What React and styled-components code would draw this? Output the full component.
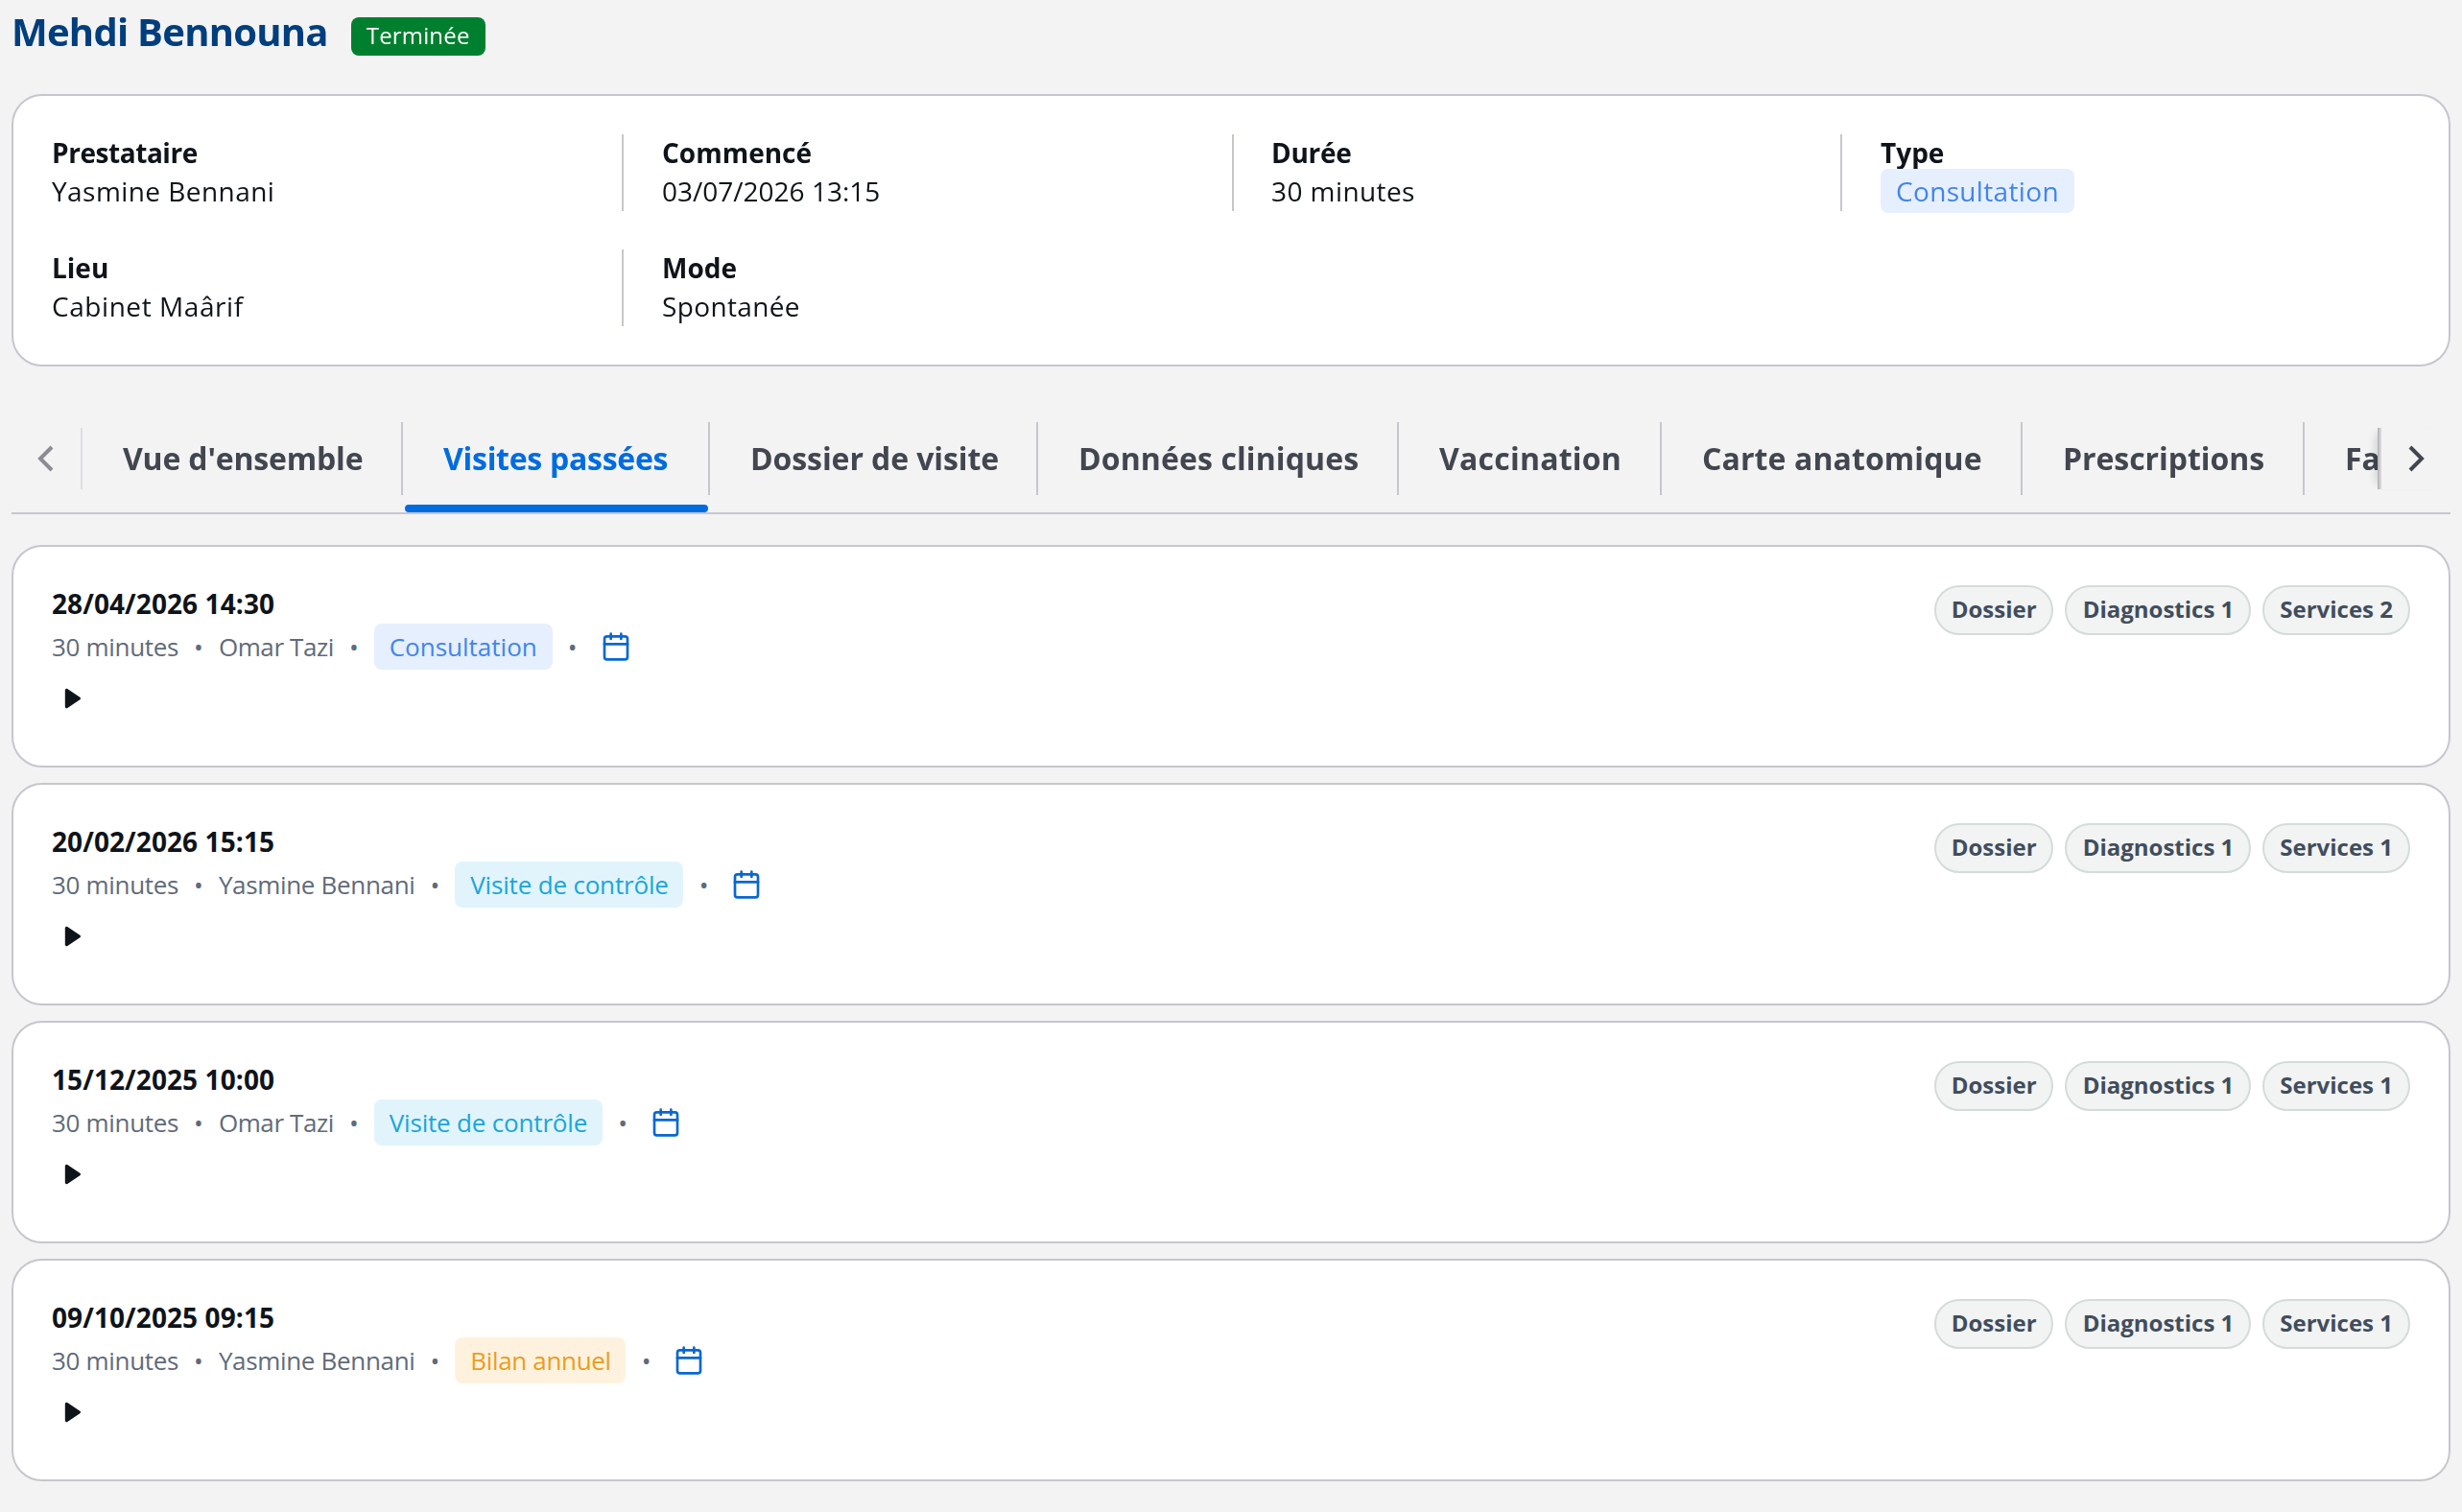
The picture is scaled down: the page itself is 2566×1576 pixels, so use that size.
import React from "react";
import styled, { createGlobalStyle, css } from "styled-components";
import { Calendar } from "lucide-react";

// track is the letter spacing of a text in px
const details = [
  { label: "Prestataire", labelTrack: -0.22, value: "Yasmine Bennani", track: 0.22 },
  { label: "Commencé", value: "03/07/2026 13:15" },
  { label: "Durée", labelTrack: -0.15, value: "30 minutes", track: 0.21 },
  { label: "Type", value: "Consultation", track: 0.17, tone: "blue" },
  { label: "Lieu", value: "Cabinet Maârif", track: 0.28 },
  { label: "Mode", value: "Spontanée", track: 0.18 },
];

const tabs = [
  { name: "Vue d'ensemble", width: 167, track: -0.09 },
  { name: "Visites passées", width: 160, track: -0.14 },
  { name: "Dossier de visite", width: 171, track: -0.05 },
  { name: "Données cliniques", width: 188, track: 0.05 },
  { name: "Vaccination", width: 137, track: 0.11 },
  { name: "Carte anatomique", width: 188, track: 0.05 },
  { name: "Prescriptions", width: 147, track: -0.03 },
  { name: "Factures", width: 110, track: 0 },
];

const omar = { name: "Omar Tazi", track: -0.2 };
const yasmine = { name: "Yasmine Bennani", track: -0.165 };

const consultation = { name: "Consultation", tone: "blue", track: 0 };
const controle = { name: "Visite de contrôle", tone: "cyan", track: -0.09 };
const bilan = { name: "Bilan annuel", tone: "amber", track: -0.17 };

const visits = [
  {
    date: "28/04/2026 14:30",
    provider: omar,
    type: consultation,
    pills: ["Dossier", "Diagnostics 1", "Services 2"],
  },
  {
    date: "20/02/2026 15:15",
    provider: yasmine,
    type: controle,
    pills: ["Dossier", "Diagnostics 1", "Services 1"],
  },
  {
    date: "15/12/2025 10:00",
    provider: omar,
    type: controle,
    pills: ["Dossier", "Diagnostics 1", "Services 1"],
  },
  {
    date: "09/10/2025 09:15",
    provider: yasmine,
    type: bilan,
    pills: ["Dossier", "Diagnostics 1", "Services 1"],
  },
];

const tones = {
  blue: { color: "#4285eb", background: "#e5effe" },
  cyan: { color: "#1ba5da", background: "#e1f4fc" },
  amber: { color: "#eb9d1e", background: "#fef2df" },
};

const Visit = ({ visit }) => (
  <VisitCard>
    <VisitHead>
      <div>
        <VisitDate>{visit.date}</VisitDate>
        <Meta>
          <MetaText $track={-0.16}>30 minutes</MetaText>
          <span>•</span>
          <MetaText $track={visit.provider.track}>{visit.provider.name}</MetaText>
          <span>•</span>
          <VisitType $tone={visit.type.tone} $track={visit.type.track}>
            {visit.type.name}
          </VisitType>
          <span>•</span>
          <IconButton>
            <Calendar size={16} />
          </IconButton>
        </Meta>
      </div>
      <Pills>
        {visit.pills.map((pill) => (
          <Pill key={pill}>{pill}</Pill>
        ))}
      </Pills>
    </VisitHead>
    <Toggle>
      <Caret viewBox="0 0 16 16">
        <path d="M4.7 3.7v8.6L11.2 8z" />
      </Caret>
    </Toggle>
  </VisitCard>
);

const App = () => {
  return (
    <Page>
      <GlobalStyle />
      <Header>
        <Title>Mehdi Bennouna</Title>
        <Status>Terminée</Status>
      </Header>

      <Summary>
        {details.map((item) => (
          <Detail key={item.label}>
            <Label $track={item.labelTrack}>{item.label}</Label>
            <Value $track={item.track}>
              {item.tone ? (
                <Tag $tone={item.tone} $track={item.track}>
                  {item.value}
                </Tag>
              ) : (
                item.value
              )}
            </Value>
          </Detail>
        ))}
      </Summary>

      <TabBar>
        <ScrollButton $disabled>
          <Chevron viewBox="0 0 16 16">
            <path d="M11 2 5 8l6 6" />
          </Chevron>
        </ScrollButton>
        <TabList>
          {tabs.map((tab) => (
            <Tab
              key={tab.name}
              $width={tab.width}
              $active={tab.name === "Visites passées"}
            >
              <TabLabel $track={tab.track}>{tab.name}</TabLabel>
            </Tab>
          ))}
        </TabList>
        <ScrollButton $right>
          <Chevron viewBox="0 0 16 16">
            <path d="m5 2 6 6-6 6" />
          </Chevron>
        </ScrollButton>
      </TabBar>

      <VisitList>
        {visits.map((visit) => (
          <Visit key={visit.date} visit={visit} />
        ))}
      </VisitList>
    </Page>
  );
};

const GlobalStyle = createGlobalStyle`
  * {
    box-sizing: border-box;
  }

  body {
    margin: 0;
    height: 1576px;
    overflow: hidden;
    background-color: #f3f3f3;
    font-family: "Open Sans", sans-serif;
    font-size: 14px;
    line-height: 20px;
    color: #0f141a;
  }
`;

const tracking = css`
  letter-spacing: ${({ $track }) => $track || 0}px;
`;

// Everything is sized for a 1283px wide page and drawn at double scale
const Page = styled.div`
  width: 1283px;
  height: 788px;
  padding: 5px 6px 0;
  overflow: hidden;
  transform: scale(2);
  transform-origin: 0 0;
`;

const Header = styled.header`
  display: flex;
  gap: 12px;
  height: 44px;
`;

const Title = styled.h1`
  margin: 0;
  height: 24px;
  font-size: 20px;
  line-height: 24px;
  font-weight: 700;
  letter-spacing: -0.37px;
  color: #003e7e;
`;

const Status = styled.span`
  height: 20px;
  margin-top: 4px;
  padding: 0 8px;
  border-radius: 4px;
  font-size: 12px;
  line-height: 20px;
  letter-spacing: 0.08px;
  color: #ffffff;
  background-color: #00802f;
`;

const Card = styled.section`
  border: 1px solid #c6c6cd;
  border-radius: 16px;
  background-color: #ffffff;
`;

const Summary = styled(Card)`
  display: grid;
  grid-template-columns: 318px 317.5px 317.5px 318px;
  row-gap: 20px;
  height: 142px;
  padding: 20px 0;

  > :nth-child(4n + 1) {
    border-color: transparent;
  }
`;

const Detail = styled.div`
  height: 40px;
  margin-left: -1px;
  padding-left: 20px;
  border-left: 1px solid #c6c6cd;
`;

const Label = styled.div`
  font-weight: 700;
  ${tracking}
`;

const Value = styled.div`
  ${tracking}
`;

const Tag = styled.span`
  padding: 2px 8px;
  border-radius: 4px;
  color: ${({ $tone }) => tones[$tone].color};
  background-color: ${({ $tone }) => tones[$tone].background};
  ${tracking}
`;

const TabBar = styled.nav`
  display: flex;
  align-items: flex-start;
  height: 53px;
  margin-top: 24px;
  border-bottom: 1px solid #c6c6cd;
`;

const ScrollButton = styled.div`
  display: flex;
  flex: none;
  align-items: center;
  justify-content: center;
  width: 37px;
  height: 32px;
  margin-top: 8px;
  border-right: 1px solid #dedee3;
  color: ${({ $disabled }) => ($disabled ? "#8c8c94" : "#424650")};

  ${({ $right }) =>
    $right &&
    css`
      position: relative;
      border-right: none;
      border-left: 1px solid #d5d5da;
      box-shadow: -1px 0 0 0 #b9b9be, -5px 0 4px -3px rgba(15, 20, 26, 0.15);
    `}
`;

const Chevron = styled.svg`
  width: 16px;
  height: 16px;
  fill: none;
  stroke: currentColor;
  stroke-width: 2;
`;

const TabList = styled.div`
  display: flex;
  flex: 1;
  min-width: 0;
  height: 52px;
  overflow: hidden;
`;

const Tab = styled.div`
  position: relative;
  flex: none;
  width: ${({ $width }) => $width}px;
  height: 52px;
  padding-top: 5px;
  color: #424650;

  ${({ $active }) =>
    $active &&
    css`
      color: #006ce0;

      &::after {
        content: "";
        position: absolute;
        left: 1px;
        right: 1px;
        bottom: 0;
        height: 4px;
        border-radius: 2px;
        background-color: #006ce0;
      }
    `}
`;

const TabLabel = styled.div`
  height: 38px;
  padding-left: 21px;
  border-right: 1px solid #c6c6cd;
  font-size: 16px;
  line-height: 38px;
  font-weight: 700;
  white-space: nowrap;
  ${tracking}
`;

const VisitList = styled.div`
  display: flex;
  flex-direction: column;
  gap: 8px;
  margin-top: 16px;
`;

const VisitCard = styled(Card)`
  height: 116px;
  padding: 20px;
`;

const VisitHead = styled.div`
  display: flex;
  justify-content: space-between;
  align-items: flex-start;
`;

const VisitDate = styled.div`
  font-weight: 700;
  letter-spacing: 0.05px;
`;

const Meta = styled.div`
  display: flex;
  align-items: center;
  gap: 8px;
  height: 24px;
  font-size: 13px;
  color: #5f6b7a;
`;

const MetaText = styled.span`
  ${tracking}
`;

const VisitType = styled(Tag)`
  height: 24px;
`;

const IconButton = styled.span`
  display: flex;
  padding: 0 4px;
  color: #0967d2;
`;

const Pills = styled.div`
  display: flex;
  gap: 6px;
`;

const Pill = styled.span`
  height: 26px;
  padding: 0 8px;
  border: 1px solid #d5dbdb;
  border-radius: 13px;
  font-size: 12px;
  line-height: 24px;
  font-weight: 700;
  color: #414d5c;
  background-color: #f2f3f3;
`;

const Toggle = styled.div`
  display: flex;
  padding: 7px 3px;
`;

const Caret = styled.svg`
  width: 16px;
  height: 16px;
  fill: #0f141a;
  stroke: #0f141a;
  stroke-width: 1.6;
  stroke-linejoin: round;
`;

export default App;
